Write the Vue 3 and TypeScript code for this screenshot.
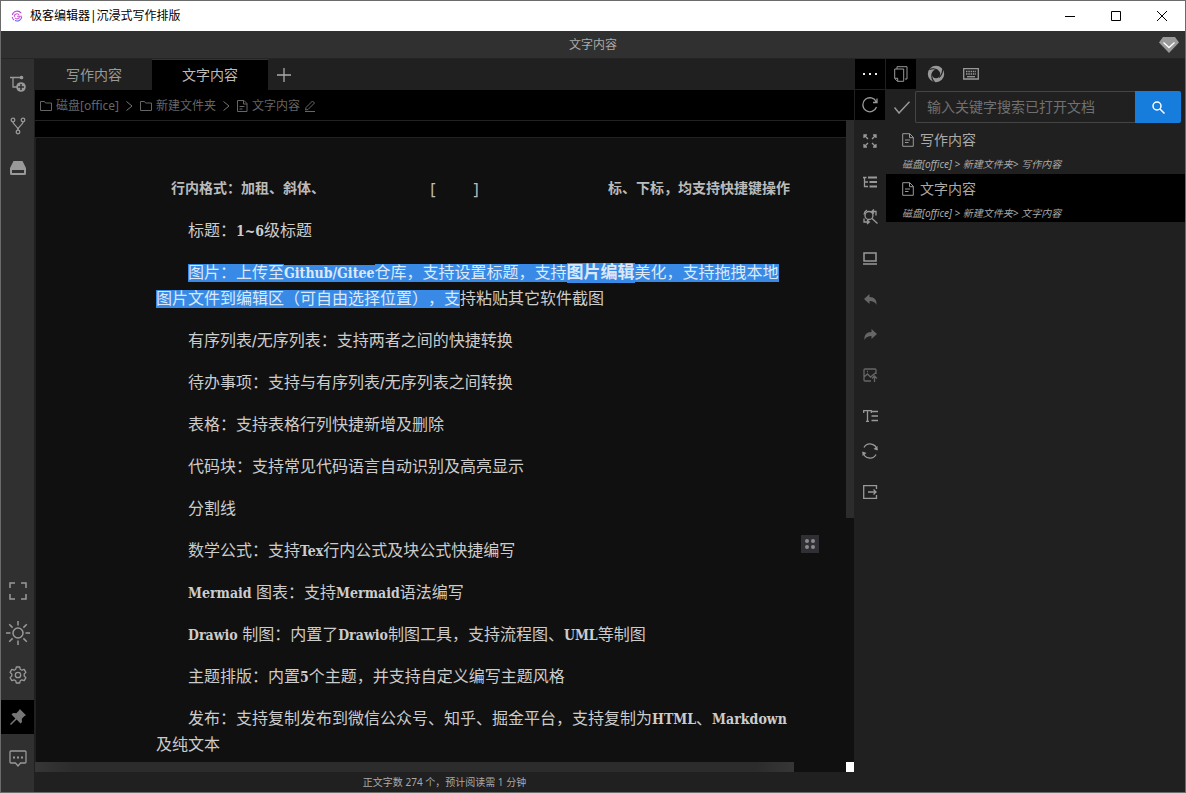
<script setup lang="ts">
import { ref } from 'vue'

interface Piece { t: string; k?: 'latin' | 'link'; sel?: boolean }

const query = ref('')
const docs = [
  { name: '写作内容', active: false },
  { name: '文字内容', active: true },
]
const L = (t: string): Piece => ({ t, k: 'latin' })
const C = (t: string): Piece => ({ t })
const S = (t: string, k?: Piece['k']): Piece => ({ t, k, sel: true })

const lines: Piece[][] = [
  [C('标题：'), L('1~6'), C('级标题')],
  [
    S('图片：上传至'), S('Github/Gitee', 'latin'), S('仓库，支持设置标题，支持'),
    S('图片编辑', 'link'), S('美化，支持拖拽本地'),
    S('图片文件到编辑区（可自由选择位置），支'), C('持粘贴其它软件截图'),
  ],
  [C('有序列表'), L('/'), C('无序列表：支持两者之间的快捷转换')],
  [C('待办事项：支持与有序列表'), L('/'), C('无序列表之间转换')],
  [C('表格：支持表格行列快捷新增及删除')],
  [C('代码块：支持常见代码语言自动识别及高亮显示')],
  [C('分割线')],
  [C('数学公式：支持'), L('Tex'), C('行内公式及块公式快捷编写')],
  [L('Mermaid '), C('图表：支持'), L('Mermaid'), C('语法编写')],
  [L('Drawio '), C('制图：内置了'), L('Drawio'), C('制图工具，支持流程图、'), L('UML'), C('等制图')],
  [C('主题排版：内置'), L('5'), C('个主题，并支持自定义编写主题风格')],
  [C('发布：支持复制发布到微信公众号、知乎、掘金平台，支持复制为'), L('HTML'), C('、'), L('Markdown'), C('及纯文本')],
]
</script>

<template>
  <div class="window">
    <header class="titlebar">
      <svg class="logo" viewBox="0 0 12 12" width="12" height="12" fill="none" stroke-width="1.1">
        <path d="M10.2 3.200A5 5 0 0 0 1.300 5M1.200 7A5 5 0 0 0 3 10" stroke="#b04be0" />
        <path d="M3.500 6.800a2.500 2.500 0 0 1 4.700-1.600M8.500 6.800a2.500 2.500 0 0 1-4.500 1M6 6.200h5" stroke="#d152dc" />
        <path d="M4 10.600a5 5 0 0 0 6.800-3.600" stroke="#5a63e8" />
      </svg>
      <span class="app-name">极客编辑器|沉浸式写作排版</span>
      <div class="win-buttons">
        <button aria-label="最小化"><svg width="10" height="10" viewBox="0 0 10 10"><path d="M0 5.5h10" /></svg></button>
        <button aria-label="最大化"><svg width="10" height="10" viewBox="0 0 10 10"><path d="M.5.5h9v9h-9z" /></svg></button>
        <button aria-label="关闭"><svg width="10" height="10" viewBox="0 0 10 10"><path d="M0 0l10 10M10 0L0 10" /></svg></button>
      </div>
    </header>

    <div class="subject">
      <span>文字内容</span>
      <button class="gem" aria-label="展开">
        <svg width="20" height="16" viewBox="0 0 20 16"><path d="M4 0h12l4 5.5L10 16 0 5.5z" fill="#999" /><path d="M4.500 5.500L10 10.500l5.500-5" fill="none" stroke="#fff" stroke-width="1.3" /></svg>
      </button>
    </div>

    <div class="body">
      <nav class="rail">
        <div class="rail-group top">
          <button aria-label="新增节点"><svg width="18" height="18" viewBox="0 0 18 18" fill="none" stroke="#999" stroke-width="1.3"><path d="M1 2.500h11M4 2.500v9.500h4" /><circle cx="12.500" cy="2.500" r="1.200" fill="#999" /><circle cx="12" cy="12" r="4.800" fill="#999" stroke="none" /><path d="M12 9v6M9 12h6" stroke="#303030" stroke-width="1.500" /></svg></button>
          <button aria-label="分支"><svg width="16" height="18" viewBox="0 0 16 18" fill="none" stroke="#999" stroke-width="1.300"><circle cx="3" cy="3" r="1.800" /><circle cx="13" cy="3" r="1.800" /><circle cx="8" cy="15" r="1.800" /><path d="M3 5c0 3 5 4 5 8M13 5c0 3-5 4-5 8" /></svg></button>
          <button aria-label="磁盘"><svg width="16" height="14" viewBox="0 0 16 14"><path d="M3.500 0h9L16 7v5.500a1.500 1.500 0 0 1-1.500 1.500h-13A1.500 1.500 0 0 1 0 12.500V7z" fill="#999" /><path d="M2 9h12v3H2z" fill="#303030" /></svg></button>
        </div>
        <div class="rail-group">
          <button aria-label="全屏"><svg width="18" height="18" viewBox="0 0 18 18" fill="none" stroke="#999" stroke-width="1.500"><path d="M1 6V1h5M12 1h5v5M17 12v5h-5M6 17H1v-5" /></svg></button>
          <button aria-label="亮度"><svg width="24" height="24" viewBox="0 0 24 24" fill="none" stroke="#999" stroke-width="1.500"><circle cx="12" cy="12" r="5" /><path d="M12 0v4.500M12 19.500V24M0 12h4.500M19.500 12H24M3.200 3.200l3.400 3.400M17.400 17.400l3.400 3.400M20.800 3.200l-3.400 3.400M6.600 17.400l-3.400 3.400" /></svg></button>
          <button aria-label="设置"><svg width="18" height="18" viewBox="0 0 18 18" fill="none" stroke="#999" stroke-width="1.300"><path d="M7.300 1h3.400l.6 2.300 1.500.9 2.400-.8 1.700 3L15.200 8v2l1.700 1.600-1.700 3-2.400-.8-1.500.9-.6 2.300H7.300l-.6-2.300-1.500-.9-2.400.8-1.700-3L2.800 10V8L1.100 6.400l1.700-3 2.400.8 1.500-.9z" stroke-linejoin="round" /><circle cx="9" cy="9" r="2.700" /></svg></button>
          <button class="pinned" aria-label="固定"><svg width="16" height="16" viewBox="0 0 16 16"><path d="M9.800 0L16 6.200l-1.500.8-2.700 2.700.2 3.300-1.500 1.500L6.600 10.600 1 16l-1-1 5.400-5.600L1.500 5.500 3 4l3.300.2L9 1.500z" fill="#777" /></svg></button>
          <button aria-label="反馈"><svg width="18" height="18" viewBox="0 0 18 18" fill="none" stroke="#999" stroke-width="1.300"><path d="M2 1h14q1 0 1 1v10q0 1-1 1h-4.500L9 16l-2.500-3H2q-1 0-1-1V2q0-1 1-1z" /><path d="M4 7.500h2M8 7.500h2M12 7.500h2" stroke-width="2" /></svg></button>
        </div>
      </nav>

      <main class="center">
        <div class="tabs">
          <button class="tab">写作内容</button>
          <button class="tab active">文字内容</button>
          <button class="plus" aria-label="新建标签"><svg width="14" height="14" viewBox="0 0 14 14" stroke="#aaa" stroke-width="1.300"><path d="M7 0v14M0 7h14" /></svg></button>
        </div>
        <div class="crumbs">
          <svg width="12" height="10" viewBox="0 0 12 10" class="line"><path d="M.5.5h4l1 1.500h6v7.500H.5z" /></svg>
          <a href="#">磁盘[office]</a>
          <svg width="7" height="10" viewBox="0 0 7 10" class="line chev"><path d="M.5.500L6 5 .5 9.500" /></svg>
          <svg width="12" height="10" viewBox="0 0 12 10" class="line"><path d="M.5.5h4l1 1.500h6v7.500H.5z" /></svg>
          <a href="#">新建文件夹</a>
          <svg width="7" height="10" viewBox="0 0 7 10" class="line chev"><path d="M.5.500L6 5 .5 9.500" /></svg>
          <svg width="11" height="12" viewBox="0 0 11 12" class="line"><path d="M.5.500h6.500l3 3v8H.5zM6.500.500V4H10M2.500 6.500h5M2.500 9h3" /></svg>
          <a href="#">文字内容</a>
          <svg width="12" height="12" viewBox="0 0 12 12" class="line"><path d="M2 7.500L8.500 1l2 2L4 9.500l-2.500.5zM1 11.500h10" /></svg>
        </div>
        <div class="ruler"></div>
        <div class="editor">
          <article class="page">
            <div class="formats">
              <span>行内格式：加租、斜体、</span>
              <span class="brackets"><i>[</i><i>]</i></span>
              <span class="end">标、下标，均支持快捷键操作</span>
            </div>
            <p v-for="(line, n) in lines" :key="n"><component :is="p.sel ? 'mark' : 'span'" v-for="(p, i) in line" :key="i" :class="p.k">{{ p.t }}</component></p>
          </article>
          <div class="vbar"><div class="vthumb"></div></div>
          <button class="grip" aria-label="菜单"><svg width="12" height="12" viewBox="0 0 12 12" fill="#8a8a90"><circle cx="3" cy="3" r="2" /><circle cx="9" cy="3" r="2" /><circle cx="3" cy="9" r="2" /><circle cx="9" cy="9" r="2" /></svg></button>
        </div>
        <div class="hbar"><div class="hthumb"></div><div class="corner"></div></div>
        <footer>正文字数 274 个，预计阅读需 1 分钟</footer>
      </main>

      <aside class="tools">
        <button class="dark" aria-label="更多"><svg width="14" height="4" viewBox="0 0 14 4" fill="#eee"><path d="M0 1h2v2H0zM6 1h2v2H6zM12 1h2v2h-2z" /></svg></button>
        <button class="dark second" aria-label="刷新"><svg width="16" height="16" viewBox="0 0 16 16" class="ic"><path d="M14.500 10A7 7 0 1 1 14.300 5M15 1.500V5.500h-4" /></svg></button>
        <button class="t1" aria-label="展开"><svg width="14" height="14" viewBox="0 0 14 14" class="ic"><path d="M1 4V1h3M1 1l4 4M10 1h3v3M13 1L9 5M13 10v3h-3M13 13L9 9M4 13H1v-3M1 13l4-4" /></svg></button>
        <button class="t2" aria-label="大纲"><svg width="14" height="12" viewBox="0 0 14 12" class="ic"><path d="M0 1.500h3.500M1.500 1.500v9H5M1.500 6H5" /><path d="M5 1.500h9M6.500 6H14M6.500 10.500H14" stroke-width="2" /></svg></button>
        <button class="t3" aria-label="查找替换"><svg width="15" height="16" viewBox="0 0 15 16" class="ic"><circle cx="6" cy="6.500" r="4" /><path d="M9 9.500l5.500 5M1 5.500A5.500 5.500 0 0 1 4 1.200M8.500 2.500h4.500v4M11 .500L8.700 2.500l2.300 2M1 9.500v3.500h5M4 11l2.300 2L4 15" /></svg></button>
        <button class="t4" aria-label="显示"><svg width="14" height="13" viewBox="0 0 14 13" class="ic"><path d="M1 1h12v8H1zM0 12h14" stroke-width="1.500" /></svg></button>
        <button class="t5" aria-label="撤销"><svg width="13" height="11" viewBox="0 0 13 11"><path d="M5.500 0v3c5 0 7.500 3 7 8-1.500-3-3.500-4-7-4v3L0 5z" fill="#666" /></svg></button>
        <button class="t6" aria-label="重做"><svg width="13" height="11" viewBox="0 0 13 11"><path d="M7.500 0v3c-5 0-7.500 3-7 8 1.500-3 3.500-4 7-4v3L13 5z" fill="#666" /></svg></button>
        <button class="t7" aria-label="上传图片"><svg width="15" height="14" viewBox="0 0 15 14" class="ic dim"><path d="M8 13H2q-1 0-1-1V2q0-1 1-1h10q1 0 1 1v4M1 9l3.500-3 3 3L13 4.500M11.500 14V8M9 10.500L11.500 8l2.500 2.500M4 3.500h1" /></svg></button>
        <button class="t8" aria-label="行距"><svg width="15" height="12" viewBox="0 0 15 12" class="ic"><path d="M.7 3V.7h7.600V3M4.500 1v10.300M3 11.300h3" /><path d="M8.500 1.500H15M8.500 6H15M8.500 10.500H15" /></svg></button>
        <button class="t9" aria-label="同步"><svg width="16" height="16" viewBox="0 0 16 16" class="ic"><path d="M1 9a7 7 0 0 0 13 2.500M15 7A7 7 0 0 0 2 4.500" /><path d="M15.500 3v4.500L11.500 6zM.5 13V8.500l4 1.500z" fill="#999" stroke="none" /></svg></button>
        <button class="t10" aria-label="导出"><svg width="15" height="14" viewBox="0 0 15 14" class="ic"><path d="M13.500 4V.7H.7v12.600h12.800V10M5 7h8M10.500 4.500L13 7l-2.500 2.500" /></svg></button>
      </aside>

      <aside class="panel">
        <div class="panel-tabs">
          <button class="on" aria-label="文档"><svg width="14" height="16" viewBox="0 0 14 16" class="ic"><path d="M3 3V.7h10V13h-2M.7 3h9v12.300H3.500L.7 12.500zM.7 12.300h3v3" stroke-width="1" /></svg></button>
          <button aria-label="主题"><svg width="18" height="18" viewBox="0 0 18 18" fill="none"><circle cx="9" cy="9" r="6.200" stroke="#999" stroke-width="4" /><path d="M2.500 4.500Q7 2.500 11 5.500M15.600 4.200Q15.800 9 12 12.500M7.500 17Q4 14 5 8.500" stroke="#202020" stroke-width="1.100" /></svg></button>
          <button aria-label="键盘"><svg width="16" height="12" viewBox="0 0 16 12" class="ic"><path d="M.7.700h14.600v10.300H.7z" /><path d="M3 3.500h10M3 6h10" stroke-dasharray="1.500 .8" stroke-width="1.500" /><path d="M4 8.700h8" /></svg></button>
        </div>
        <form class="search" @submit.prevent>
          <svg width="16" height="13" viewBox="0 0 16 13" class="ic"><path d="M.5 6.500L5 12 15.500.7" stroke-width="1.500" /></svg>
          <input v-model="query" aria-label="搜索文档" placeholder="输入关键字搜索已打开文档" />
          <button aria-label="搜索"><svg width="13" height="13" viewBox="0 0 13 13" fill="none" stroke="#fff" stroke-width="1.500"><circle cx="5" cy="5" r="4" /><path d="M8 8l4.500 4.500" /></svg></button>
        </form>
        <ul class="docs">
          <li v-for="d in docs" :key="d.name" :class="{ active: d.active }">
            <a href="#"><svg width="12" height="14" viewBox="0 0 12 14" class="ic"><path d="M.7.700h7l3.600 3.600v9H.7zM7.500.700v4h4M3 7h5M3 9.500h3.500" stroke-width="1" /></svg>{{ d.name }}</a>
            <small>磁盘[office] &gt; 新建文件夹&gt; {{ d.name }}</small>
          </li>
        </ul>
      </aside>
    </div>
  </div>
</template>

<style>
body { margin: 0; overflow: hidden; background: #202020; }
</style>

<style scoped>
* { box-sizing: border-box; }
button { border: 0; padding: 0; background: none; display: flex; align-items: center; justify-content: center; font: inherit; color: inherit; flex: none; }
a { color: inherit; text-decoration: none; }
svg { flex: none; }
.window { height: 100vh; display: flex; flex-direction: column; border: 1px solid #6b6b6b; font: 12px/18px "Noto Sans", "Noto Sans CJK SC", sans-serif; color: #aaa; }
.titlebar { height: 30px; flex: none; display: flex; align-items: center; background: #fff; color: #000; padding-left: 10px; }
.app-name { margin-left: 7px; }
.win-buttons { margin-left: auto; display: flex; }
.win-buttons button { width: 46px; height: 30px; }
.win-buttons path { fill: none; stroke: #000; }
.subject { height: 28px; flex: none; display: grid; grid-template-columns: 1fr auto 1fr; align-items: center; background: #303030; border-bottom: 1px solid #252525; padding-top: 1px; color: #aaa; }
.subject span { grid-column: 2; }
.gem { justify-self: end; margin-right: 6px; }
.body { flex: 1; min-height: 0; display: flex; background: #202020; }
.rail { width: 33px; flex: none; background: #303030; display: flex; flex-direction: column; justify-content: space-between; padding: 8px 0 16px; }
.rail-group { display: flex; flex-direction: column; gap: 8px; }
.rail button { width: 33px; height: 34px; }
.rail .pinned { background: #000; }
.center { flex: 1; min-width: 0; display: flex; flex-direction: column; padding-left: 1px; }
.tabs { height: 31px; flex: none; display: flex; font-size: 14px; line-height: 20px; color: #999; padding-left: 1px; }
.tab { width: 116px; height: 31px; }
.tab.active { background: #000; color: #bbb; border-top: 1px solid #333; }
.plus { width: 32px; }
.crumbs { height: 31px; flex: none; display: flex; align-items: center; gap: 4px; background: #000; color: #666; border-bottom: 1px solid #222; padding: 1px 0 0 5px; }
.line { fill: none; stroke: #666; }
.chev { margin: 0 3px; stroke: #777; }
.ruler { height: 17px; flex: none; background: #000; border-bottom: 1px solid #222; margin-right: 8px; }
.editor { flex: 1; min-height: 0; overflow: visible; position: relative; display: flex; background: #101010; margin-left: 1px; }
.page { flex: 1; min-width: 0; padding: 38px 56px 0 120px; font: 16px/26px "Liberation Serif", "Noto Sans CJK SC", serif; text-spacing-trim: space-all; color: #ccc; overflow: hidden; }
.formats { display: flex; justify-content: space-between; align-items: center; height: 26px; padding-left: 15px; font-size: 14px; font-weight: 700; margin-bottom: 16px; color: #bbb; }
.brackets { display: flex; gap: 38px; padding-right: 24px; font: 16px/26px "Noto Sans", sans-serif; }
.brackets i { font-style: normal; }
.page p { margin: 0 0 16px; text-indent: 32px; }
.latin { font-family: "DejaVu Serif Condensed", "Liberation Serif", serif; font-size: 14px; font-weight: 700; line-height: 20px; }
mark { background: #388ae6; color: #dbe8f8; padding-bottom: 1px; }
.link { font-weight: 700; font-size: 17px; }
.vbar { width: 8px; flex: none; margin-top: -18px; }
.vthumb { height: 62%; background: #2c2c2c; }
.grip { position: absolute; right: 35px; bottom: 209px; width: 18px; height: 18px; background: #303034; }
.hbar { height: 10px; flex: none; display: flex; justify-content: space-between; background: #101010; }
.hthumb { flex: 0 1 759px; background: linear-gradient(90deg, #363636, #2c2c2c 5%, #2c2c2c 95%, #363636); }
.corner { width: 8px; background: #fff; }
footer { height: 20px; flex: none; text-align: center; font-size: 10px; line-height: 20px; color: #aaa; }
.tools { width: 32px; flex: none; display: flex; flex-direction: column; align-items: center; }
.tools button { width: 30px; height: 30px; }
.tools .dark { background: #000; }
.tools .second { margin-top: 1px; }
.tools .t1 { margin-top: 6px; }
.tools .t2 { margin-top: 11px; }
.tools .t3 { margin-top: 5px; }
.tools .t4 { margin-top: 11px; }
.tools .t5 { margin-top: 11px; }
.tools .t6 { margin-top: 5px; }
.tools .t7 { margin-top: 11px; }
.tools .t8 { margin-top: 11px; }
.tools .t9 { margin-top: 5px; }
.tools .t10 { margin-top: 11px; }
.ic { fill: none; stroke: #999; stroke-width: 1.3; }
.dim { stroke: #666; }
.panel { width: 299px; flex: none; }
.panel-tabs { display: flex; gap: 5px; height: 32px; }
.panel-tabs button { width: 30px; height: 30px; }
.panel-tabs .on { background: #000; }
.search { display: flex; align-items: center; padding: 0 4px 0 8px; height: 32px; }
.search input { flex: 1; min-width: 0; height: 32px; margin-left: 5px; padding: 0 11px 2px; border: 1px solid #444; border-right: 0; border-radius: 2px 0 0 2px; background: #202020; color: #ccc; font: 14px/20px "Noto Sans", "Noto Sans CJK SC", sans-serif; outline: 0; }
.search input::placeholder { color: #707070; opacity: 1; }
.search button { width: 46px; height: 32px; background: #177ddc; border-radius: 0 2px 2px 0; }
.docs { list-style: none; margin: 2px 0 0; padding: 0; }
.docs li { height: 48px; padding: 3px 16px 0; margin-bottom: 1px; }
.docs li.active { background: #000; }
.docs a { display: flex; align-items: center; gap: 6px; font-size: 14px; line-height: 24px; color: #aaa; }
.docs small { display: block; font-size: 10px; line-height: 24px; font-style: italic; white-space: nowrap; }
</style>
